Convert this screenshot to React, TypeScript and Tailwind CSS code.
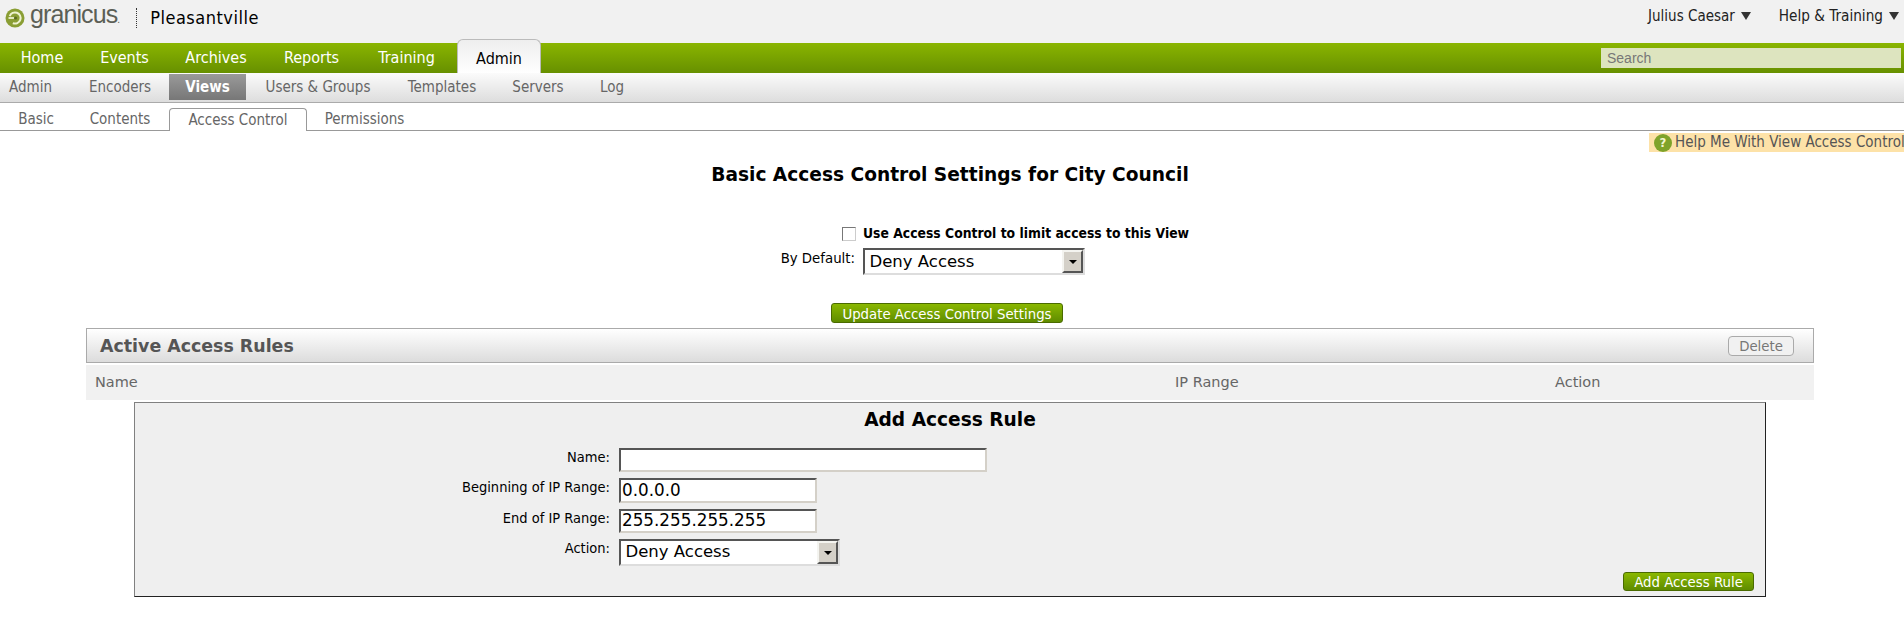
const mainNav = [
  { label: 'Home', w: 'w-[80px]' },
  { label: 'Events', w: 'w-[85px]' },
  { label: 'Archives', w: 'w-[98px]' },
  { label: 'Reports', w: 'w-[93px]' },
  { label: 'Training', w: 'w-[97px]' },
];

const subNav = [
  { label: 'Admin', w: 'w-[61px]' },
  { label: 'Encoders', w: 'w-[98px] ml-[10px]' },
  { label: 'Views', w: 'w-[77px]', active: true },
  { label: 'Users & Groups', w: 'w-[144px]' },
  { label: 'Templates', w: 'w-[104px]' },
  { label: 'Servers', w: 'w-[88px]' },
  { label: 'Log', w: 'w-[60px]' },
];

const Arrow = () => <span className="ml-[6px] h-0 w-0 border-x-[5.5px] border-t-[8px] border-x-transparent border-t-[#333]" />;

const FakeSelect = ({ w }: { w: string }) => (
  <div className={`${w} flex h-[27px] items-center justify-between border-2 border-t-[#555] border-l-[#555] border-r-[#ddd] border-b-[#ddd] bg-white pl-[4.5px] font-['DejaVu_Sans',sans-serif] text-[16.5px] text-black`}>
    <span>Deny Access</span>
    <span className="flex h-[23px] w-[21px] items-center justify-center border-2 border-t-[#f4f4f0] border-l-[#f4f4f0] border-r-[#555] border-b-[#555] bg-[#d4d0c8]">
      <span className="h-0 w-0 border-x-[4px] border-t-[4px] border-x-transparent border-t-black" />
    </span>
  </div>
);

const GreenButton = ({ label, size }: { label: string; size: string }) => (
  <button className={`${size} rounded-[3px] border border-[#4a6b00] bg-gradient-to-b from-[#8ab800] to-[#5f8c00] text-[14.8px] leading-[17px] text-white`}>
    {label}
  </button>
);

const inset = 'border-2 border-t-[#555] border-l-[#555] border-r-[#d4d0c8] border-b-[#d4d0c8] bg-white px-[1px]';

export default function App() {
  return (
    <div className="min-h-[621px] w-[1904px] overflow-hidden bg-white font-['DejaVu_Sans_Condensed','Noto_Sans',sans-serif] text-[15px] text-[#222]">
      {/* top bar */}
      <div className="flex h-[43px] items-start justify-between bg-[#f1f1f1]">
        <div className="flex items-center pl-[5px]">
          <svg width="20" height="20" viewBox="0 0 20 20" className="-mt-[1px]">
            <circle cx="10" cy="10" r="9.5" fill="#8a9e34" />
            <circle cx="10" cy="10" r="5.6" fill="none" stroke="#eef2d0" strokeWidth="2" strokeDasharray="26 9" transform="rotate(200 10 10)" />
            <path d="M3.5 10h7.5" stroke="#eef2d0" strokeWidth="1.8" />
            <circle cx="10.5" cy="10" r="1.6" fill="#5a6b1e" />
          </svg>
          <span className="ml-[5px] -translate-y-[1px] font-['Liberation_Sans',sans-serif] text-[25px] leading-[30px] tracking-[-0.9px] text-[#5c5f56]">granicus<span className="text-[10px]">.</span></span>
          <span className="ml-[17px] h-[20px] border-l border-dotted border-[#333]" />
          <span className="ml-[13px] text-[18px] leading-[26px] tracking-[0.5px] text-black">Pleasantville</span>
        </div>
        <div className="flex items-center pt-[5px] pr-[5px]">
          <span>Julius Caesar</span>
          <Arrow />
          <span className="ml-[28px] text-[15.2px]">Help &amp; Training</span>
          <Arrow />
        </div>
      </div>

      {/* main nav */}
      <div className="flex h-[30px] items-end justify-between bg-gradient-to-b from-[#8ab500] to-[#679000] pr-[3px]">
        <div className="flex items-end pl-[2px]">
          {mainNav.map((item) => (
            <a key={item.label} className={`${item.w} flex h-[30px] items-center justify-center text-[16px] text-white`}>
              {item.label}
            </a>
          ))}
          <a className="ml-[2px] flex h-[34px] w-[84px] items-center justify-center rounded-t-[6px] border border-b-0 border-[#bbb] bg-gradient-to-b from-[#eee] to-white pt-[5px] text-[16px] text-black">
            Admin
          </a>
        </div>
        <input placeholder="Search" className="mb-[5px] h-[20px] w-[300px] bg-[#dde4bf] px-[6px] font-['Liberation_Sans',sans-serif] text-[14px] placeholder:text-[#777]" />
      </div>

      {/* sub nav */}
      <div className="flex h-[30px] items-center border-b border-[#aaa] bg-gradient-to-b from-[#fbfbfb] to-[#dddddd] pb-[1px] text-[#666]">
        {subNav.map((item) => (
          <span key={item.label} className={item.active ? `${item.w} flex h-[26px] items-center justify-center bg-gradient-to-b from-[#9a9a9a] to-[#777] font-bold text-white` : `${item.w} text-center`}>
            {item.label}
          </span>
        ))}
      </div>

      {/* tabs */}
      <div className="flex h-[28px] items-end border-b border-[#999] text-[#666]">
        <span className="flex h-[22px] w-[72px] items-center justify-center pt-[1px]">Basic</span>
        <span className="flex h-[22px] w-[96px] items-center justify-center pt-[1px]">Contents</span>
        <span className="mb-[-1px] ml-[1px] flex h-[23px] w-[138px] items-center justify-center rounded-t-[4px] border border-b-0 border-[#999] bg-white">Access Control</span>
        <span className="flex h-[22px] w-[115px] items-center justify-center pt-[1px]">Permissions</span>
      </div>

      {/* help banner */}
      <div className="mt-[2px] flex justify-end overflow-hidden">
        <div className="flex h-[19px] w-[255px] items-center overflow-hidden whitespace-nowrap bg-[#fde2a8] pl-[5px] text-[#555]">
          <span className="mr-[3px] flex h-[18px] w-[18px] shrink-0 items-center justify-center rounded-full bg-[#7fa32a] text-[13px] font-bold text-[#f4f6d0]">?</span>
          Help Me With View Access Control
        </div>
      </div>

      <div className="w-[1900px]">
        {/* settings */}
        <h1 className="mt-[12px] text-center font-['DejaVu_Sans',sans-serif] text-[18.6px] font-bold leading-[22px] text-black">
          Basic Access Control Settings for City Council
        </h1>
        <div className="mt-[37px] grid grid-cols-[855px_auto] gap-x-[8px] leading-[20px]">
          <div className="flex justify-end pt-[4px]">
            <span className="mr-[-1px] h-[14px] w-[14px] border border-t-[#777] border-l-[#777] border-r-[#ccc] border-b-[#ccc] bg-white" />
          </div>
          <div className="text-[13.8px] font-bold text-black">Use Access Control to limit access to this View</div>
          <div className="mt-[5px] text-right text-[14.8px] text-black">By Default:</div>
          <div className="mt-[5px]"><FakeSelect w="w-[222px]" /></div>
        </div>
        <div className="mt-[28px] flex justify-center">
          <GreenButton label="Update Access Control Settings" size="h-[20px] w-[232px] mr-[6px]" />
        </div>

        {/* active rules */}
        <div className="mx-[86px] mt-[5px]">
          <div className="flex h-[35px] items-center justify-between border border-[#aaa] bg-gradient-to-b from-white to-[#dcdcdc] pl-[13px] pr-[19px]">
            <h2 className="pt-[1px] font-['DejaVu_Sans',sans-serif] text-[17.4px] font-bold text-[#555]">Active Access Rules</h2>
            <button className="h-[20px] w-[66px] rounded-[4px] border border-[#aaa] bg-[#f1f1f1] text-[14.8px] leading-[17px] text-[#777]">Delete</button>
          </div>
          <div className="mt-[2px] grid h-[35px] grid-cols-[1080px_380px_1fr] items-center bg-[#f1f1f1] pl-[9px] pt-[1px] font-['DejaVu_Sans',sans-serif] text-[14.5px] text-[#666]">
            <span>Name</span>
            <span>IP Range</span>
            <span>Action</span>
          </div>
        </div>

        {/* add rule */}
        <div className="mx-[134px] mt-[2px] h-[195px] border border-t-[#808080] border-l-[#808080] border-r-[#222] border-b-[#222] bg-[#efefef]">
          <h2 className="mt-[5px] text-center font-['DejaVu_Sans',sans-serif] text-[18.6px] font-bold leading-[24px] text-black">Add Access Rule</h2>
          <div className="mt-[16px] grid grid-cols-[475px_auto] justify-start gap-x-[9px] text-[14.5px] text-black">
            <span className="text-right leading-[18px]">Name:</span>
            <input className={`h-[24px] w-[368px] ${inset}`} />
            <span className="mt-[6px] text-right leading-[18px]">Beginning of IP Range:</span>
            <input defaultValue="0.0.0.0" className={`mt-[6px] h-[25px] w-[198px] font-['DejaVu_Sans',sans-serif] text-[16.8px] ${inset}`} />
            <span className="mt-[6px] text-right leading-[18px]">End of IP Range:</span>
            <input defaultValue="255.255.255.255" className={`mt-[6px] h-[24px] w-[198px] font-['DejaVu_Sans',sans-serif] text-[16.8px] ${inset}`} />
            <span className="mt-[6px] text-right leading-[18px]">Action:</span>
            <div className="mt-[6px]"><FakeSelect w="w-[221px]" /></div>
          </div>
          <div className="mt-[6px] flex justify-end pr-[11px]">
            <GreenButton label="Add Access Rule" size="h-[19px] w-[131px]" />
          </div>
        </div>
      </div>
    </div>
  );
}
